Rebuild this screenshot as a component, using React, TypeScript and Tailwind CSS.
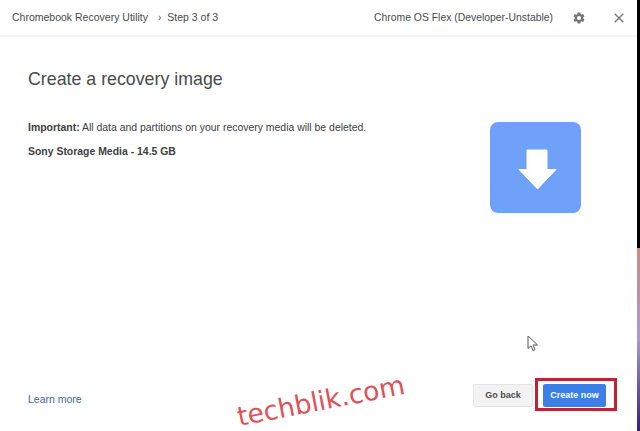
export default function App() {
  return (
    <div className="relative w-[640px] h-[431px] overflow-hidden bg-white flex font-['Liberation_Sans',Arial,sans-serif]">
      <div className="flex-1 flex flex-col min-w-0">
        <header className="h-[37px] shrink-0 border-b-2 border-[#f3f3f3] flex items-center pl-3 pr-[13px] text-[#4a4a4a] text-[10.5px]">
          <span>Chromebook Recovery Utility</span>
          <span className="ml-[10px] mr-[6px] text-[10px]">›</span>
          <span>Step 3 of 3</span>
          <span className="ml-auto text-[10.4px]">Chrome OS Flex (Developer-Unstable)</span>
          <svg className="ml-[19px]" width="14" height="14" viewBox="0 0 24 24" fill="#777777">
            <path fillRule="evenodd" d="M19.14 12.94c.04-.3.06-.61.06-.94s-.02-.64-.07-.94l2.03-1.58a.5.5 0 0 0 .12-.64l-1.92-3.32a.5.5 0 0 0-.61-.22l-2.39.96a7 7 0 0 0-1.62-.94l-.36-2.54a.5.5 0 0 0-.48-.42h-3.84a.5.5 0 0 0-.48.42l-.36 2.54c-.59.24-1.13.56-1.62.94l-2.39-.96a.5.5 0 0 0-.61.22L2.68 8.84a.5.5 0 0 0 .12.64l2.03 1.58c-.05.3-.08.63-.08.94s.02.64.07.94l-2.03 1.58a.5.5 0 0 0-.12.64l1.92 3.32c.14.22.39.29.61.22l2.39-.96c.5.38 1.03.7 1.62.94l.36 2.54c.05.24.24.42.48.42h3.84c.24 0 .44-.18.47-.42l.36-2.54c.59-.24 1.13-.56 1.62-.94l2.39.96c.22.08.47 0 .59-.22l1.92-3.32a.5.5 0 0 0-.12-.64l-2-1.58zM12 15.6a3.6 3.6 0 1 1 0-7.2 3.6 3.6 0 0 1 0 7.2z" />
          </svg>
          <svg className="ml-[28px]" width="10" height="10" viewBox="0 0 10 10" stroke="#777777" strokeWidth="1.4" fill="none">
            <path d="M0.7 0.7 9.3 9.3M9.3 0.7 0.7 9.3" />
          </svg>
        </header>
        <main className="flex-1 flex flex-col pl-7 pr-[20px] pb-[20px] min-h-0">
          <h1 className="mt-[31px] text-[17.8px] leading-[22px] text-[#4a4a4a]">Create a recovery image</h1>
          <div className="mt-[21px] flex justify-between">
            <div className="pt-[10px] text-[10.45px] leading-[14px] text-[#404040]">
              <p><b>Important:</b> All data and partitions on your recovery media will be deleted.</p>
              <p className="mt-[10px] font-bold text-[#404040]">Sony Storage Media - 14.5 GB</p>
            </div>
            <div className="mt-[11px] mr-[36px] w-[91px] h-[91px] rounded-[8px] bg-[#6fa1fb] flex items-center justify-center">
              <svg className="ml-[3px] mt-[3px]" width="39" height="41" viewBox="0 0 39 41" fill="white">
                <path d="M9 1H29V20.5H38L19.5 40L1 20.5H9Z" strokeLinejoin="round" stroke="white" strokeWidth="1" />
              </svg>
            </div>
          </div>
          <div className="mt-auto flex items-start justify-between">
            <a className="mt-[14px] text-[#3f6593] text-[10.5px] leading-[14px]">Learn more</a>
            <div className="flex items-start gap-[2px]">
              <button className="mt-[6px] w-[60px] h-[23px] bg-[#f3f3f3] border border-[#e4e4e4] text-[#4a4a4a] text-[9px] font-bold rounded-[2px]">Go back</button>
              <div className="border-[3px] border-[#bd2333] pl-[5px] pr-[8px] pt-[3px] pb-px">
                <button className="block w-[63px] h-[23px] bg-[#3c7fe6] text-white text-[9px] font-bold rounded-[2px]">Create now</button>
              </div>
            </div>
          </div>
        </main>
      </div>
      <div className="w-[3px] shrink-0 flex flex-col">
        <div className="h-[248px] bg-black" />
        <div className="flex-1 bg-gradient-to-b from-[#c98a80] via-[#a79ad0] to-[#3a1a78]" />
      </div>
      <span className="absolute left-[240px] top-[404px] text-[26.5px] leading-none text-[#e05058] font-['DejaVu_Sans',sans-serif] -rotate-[11deg] origin-bottom-left">techblik.com</span>
      <svg className="absolute left-[527px] top-[335px]" width="12" height="17" viewBox="0 0 12 17" fill="white" stroke="#555555" strokeWidth="1">
        <path d="M1 1V13.5L4 10.8L6 15.5L8 14.6L6 10H10.5Z" />
      </svg>
    </div>
  );
}
